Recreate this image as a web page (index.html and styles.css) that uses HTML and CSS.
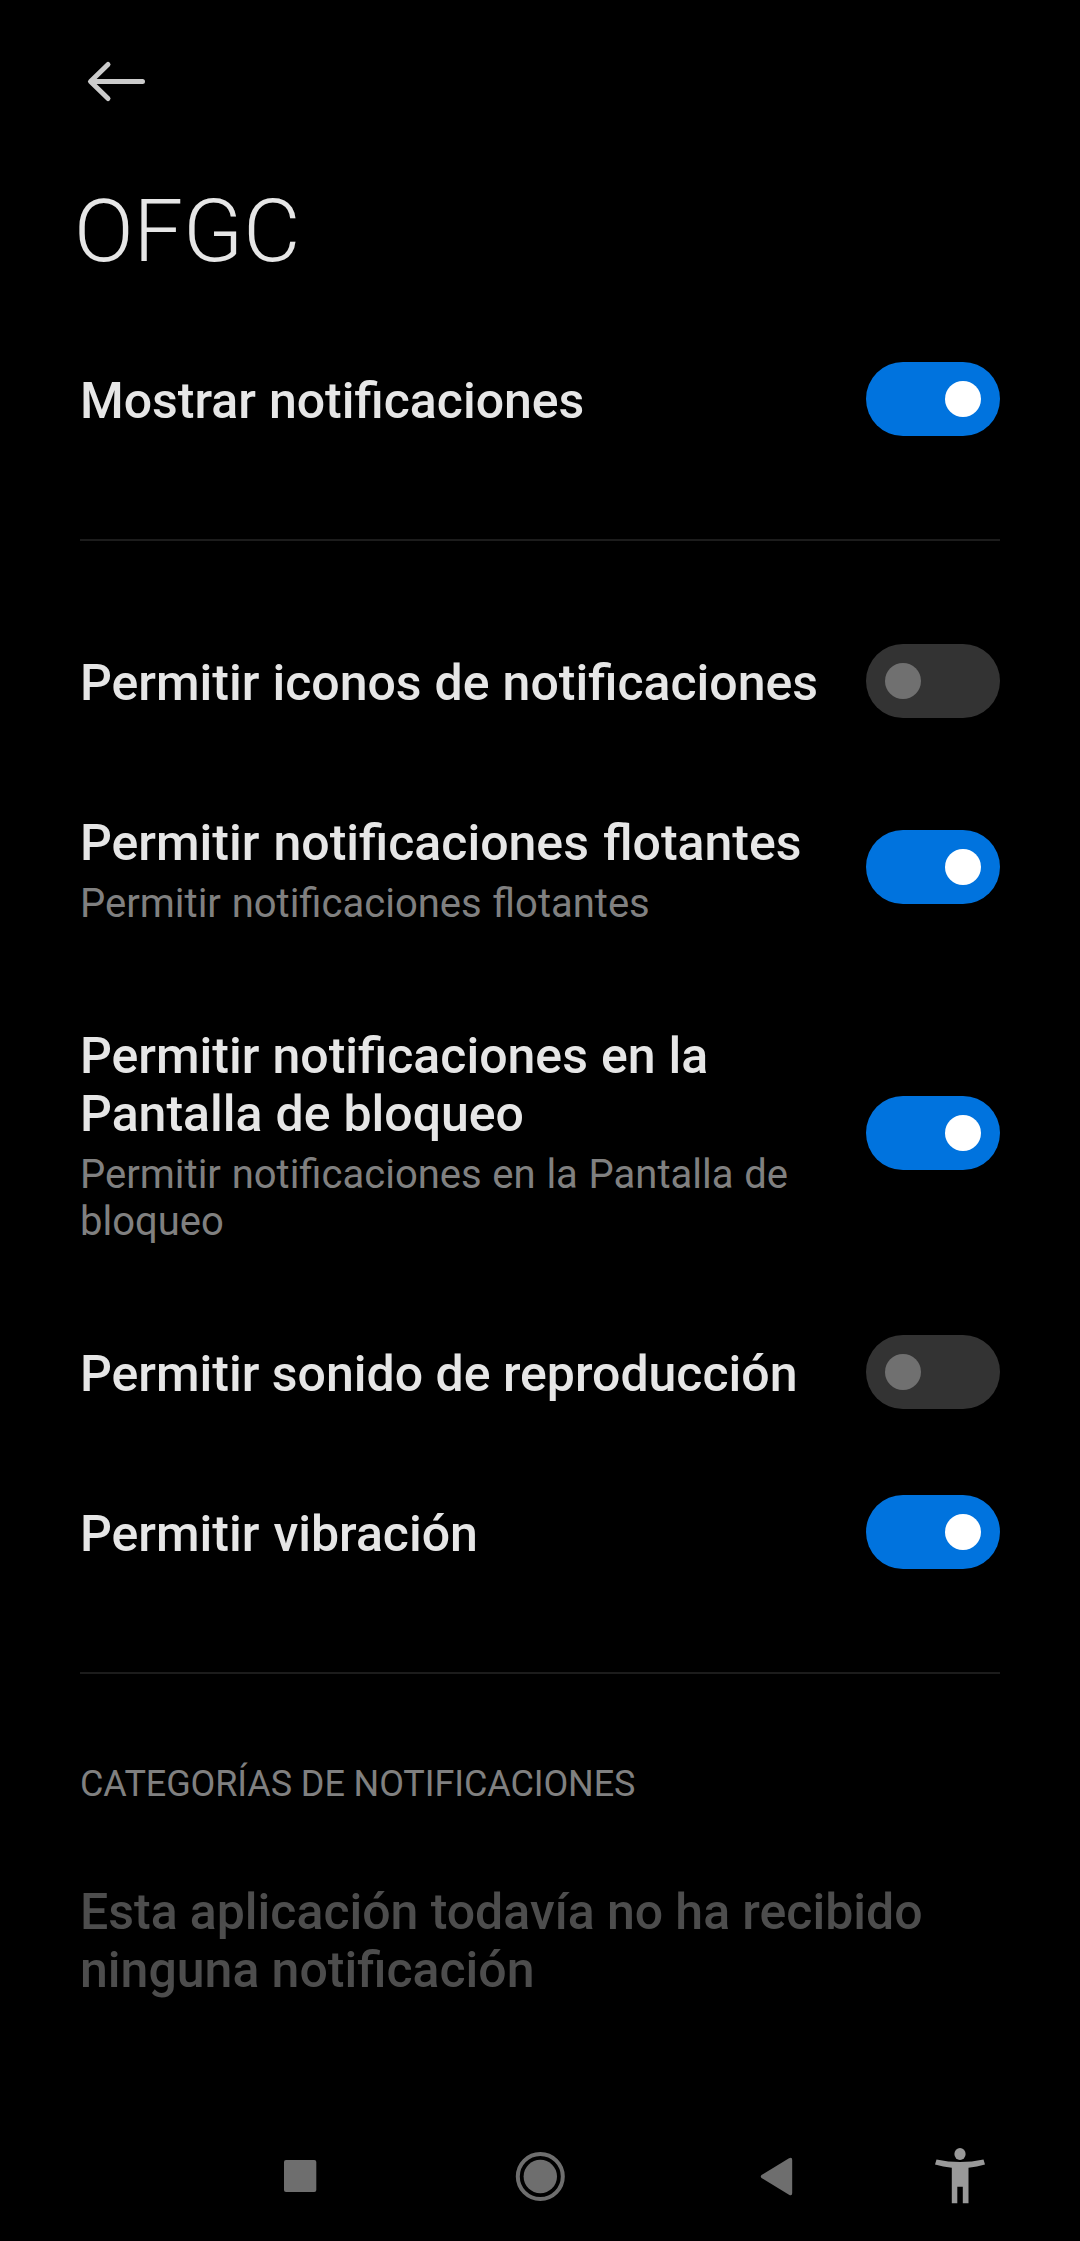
FILE: index.html
```html
<!DOCTYPE html>
<html lang="es">
<head>
<meta charset="utf-8">
<title>OFGC</title>
<link rel="stylesheet" href="styles.css">
</head>
<body>
<header class="header">
  <svg class="back" viewBox="0 0 60 44" width="60" height="44"><path d="M56.5 21.5H5M22 4.5L4.5 21.5L22 38.5"/></svg>
  <h1 class="title">OFGC</h1>
</header>
<main class="settings">
  <section class="group main-group">
    <div class="row main-row"><div class="text"><div class="label">Mostrar notificaciones</div></div><span class="switch on"></span></div>
  </section>
  <section class="group options">
    <div class="row single"><div class="text"><div class="label">Permitir iconos de notificaciones</div></div><span class="switch"></span></div>
    <div class="row double"><div class="text"><div class="label wide">Permitir notificaciones flotantes</div><div class="summary">Permitir notificaciones flotantes</div></div><span class="switch on"></span></div>
    <div class="row tall"><div class="text"><div class="label">Permitir notificaciones en la<br>Pantalla de bloqueo</div><div class="summary">Permitir notificaciones en la Pantalla de<br>bloqueo</div></div><span class="switch on"></span></div>
    <div class="row single"><div class="text"><div class="label tight">Permitir sonido de reproducción</div></div><span class="switch"></span></div>
    <div class="row single"><div class="text"><div class="label wide">Permitir vibración</div></div><span class="switch on"></span></div>
  </section>
  <section class="categories">
    <h2 class="category-title">CATEGORÍAS DE NOTIFICACIONES</h2>
    <p class="label empty">Esta aplicación todavía no ha recibido<br>ninguna notificación</p>
  </section>
</main>
<nav class="navbar">
  <svg viewBox="0 0 1080 130" width="1080" height="130">
    <rect x="284" y="49" width="32.3" height="32" rx="2"/>
    <circle cx="540.3" cy="65.5" r="16.7"/><circle class="ring" cx="540.3" cy="65.5" r="22.5"/>
    <path d="M761.5 64L789 47.2Q792.2 45.5 792.2 49V82Q792.2 85.5 789 83.8L761.5 67Q760 65.5 761.5 64Z"/>
    <g class="person"><ellipse cx="960" cy="43" rx="5.6" ry="5.9"/><path d="M936.5 48.5Q960 53.5 983.5 48.5L985 53.5Q977 55.7 968.5 56.7V92.3H962.8V75.7H957.3V92.3H951.8V56.7Q943 55.7 935 53.5Z"/></g>
  </svg>
</nav>
</body>
</html>
```
FILE: styles.css
```css
* { box-sizing: border-box; }
body { margin: 0; width: 1080px; height: 2241px; background: #000; color: #e6e6e6; font-family: Roboto, "Noto Sans", sans-serif; display: flex; flex-direction: column; overflow: hidden; }
.header { height: 319px; padding: 60px 74px 0; }
.back { display: block; margin-left: 12px; fill: none; stroke: #ccc; stroke-width: 5; stroke-linecap: round; stroke-linejoin: round; }
.title { margin: 77px 0 0; font-size: 88px; line-height: 100px; font-weight: 300; }
.settings { padding: 0 80px; flex: 1; }
.group { border-bottom: 2px solid #1c1c1c; }
.main-group { height: 222px; }
.row { display: flex; align-items: center; justify-content: space-between; }
.main-row { height: 160px; }
.text { padding-top: 4px; }
.double .text, .tall .text { padding-top: 7px; }
.label { font-size: 50px; line-height: 58px; font-weight: 500; white-space: nowrap; word-spacing: 0.6px; }
.label.wide { word-spacing: 1.6px; }
.label.tight { word-spacing: 0; }
.summary { margin-top: 8px; font-size: 40px; line-height: 47px; color: #808080; white-space: nowrap; word-spacing: 0.8px; }
.options { height: 1133px; padding-top: 60px; }
.single { height: 160px; }
.double { height: 212px; }
.tall { height: 319px; }
.switch { width: 134px; height: 74px; padding: 19px; border-radius: 37px; background: #333; display: flex; flex: none; }
.switch::before { content: ""; width: 36px; height: 36px; border-radius: 50%; background: #707070; }
.switch.on { justify-content: flex-end; background: #0073de; }
.switch.on::before { background: #fff; }
.category-title { margin: 89px 0 0; font-size: 36px; line-height: 42px; font-weight: 400; letter-spacing: -0.1px; color: #808080; }
.label.empty { margin: 78px 0 0; color: #4d4d4d; word-spacing: -0.2px; }
.navbar { height: 130px; }
.navbar svg { display: block; fill: #6e6e6e; }
.navbar .ring { fill: none; stroke: #6e6e6e; stroke-width: 4; }
.navbar .person { fill: #999; }
```
